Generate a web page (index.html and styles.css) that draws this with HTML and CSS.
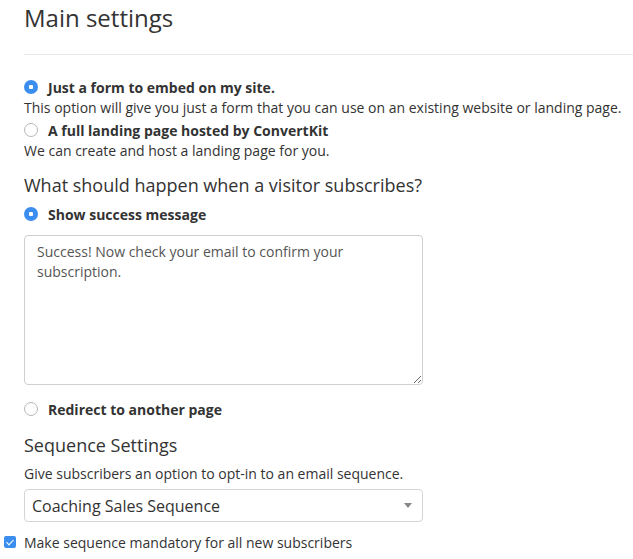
FILE: index.html
```html
<!DOCTYPE html>
<html>
<head>
<meta charset="utf-8">
<link rel="stylesheet" href="styles.css">
</head>
<body>
<div class="page">
  <h1 class="title">Main settings</h1>
  <div class="rule"></div>

  <div class="option">
    <label class="radio-row"><input type="radio" name="kind" class="radio" checked><span class="radio-label">Just a form to embed on my site.</span></label>
    <p class="desc">This option will give you just a form that you can use on an existing website or landing page.</p>
  </div>
  <div class="option">
    <label class="radio-row"><input type="radio" name="kind" class="radio"><span class="radio-label">A full landing page hosted by ConvertKit</span></label>
    <p class="desc">We can create and host a landing page for you.</p>
  </div>

  <h2 class="subhead">What should happen when a visitor subscribes?</h2>
  <label class="radio-row"><input type="radio" name="after" class="radio" checked><span class="radio-label">Show success message</span></label>
  <textarea class="message">Success! Now check your email to confirm your subscription.</textarea>
  <label class="radio-row redirect"><input type="radio" name="after" class="radio"><span class="radio-label">Redirect to another page</span></label>

  <h2 class="subhead seq">Sequence Settings</h2>
  <p class="desc seq-desc">Give subscribers an option to opt-in to an email sequence.</p>
  <div class="select">
    <span class="select-value">Coaching Sales Sequence</span>
    <span class="caret"></span>
  </div>
  <label class="check-row"><input type="checkbox" class="check" checked><span>Make sequence mandatory for all new subscribers</span></label>
</div>
</body>
</html>
```
FILE: styles.css
```css
html, body {
  margin: 0;
  padding: 0;
  background: #fff;
}
body {
  font-family: "Open Sans", "Liberation Sans", sans-serif;
  color: #333;
  font-size: 14px;
}
.page {
  padding-left: 24px;
}
.title {
  margin: 0;
  font-size: 24px;
  font-weight: 400;
  line-height: 36px;
  color: #333;
}
.rule {
  height: 1px;
  background: #e6e6e6;
  margin-top: 18px;
  margin-bottom: 21px;
}
.radio-row {
  display: flex;
  align-items: center;
  height: 22px;
}
.radio {
  -webkit-appearance: none;
  appearance: none;
  margin: 0 10px 0 0;
  width: 14px;
  height: 14px;
  min-width: 14px;
  border-radius: 50%;
  border: 1px solid #b8b8b8;
  background: #fff;
  box-sizing: border-box;
  flex: none;
}
.radio:checked {
  border: none;
  background: radial-gradient(circle, #fff 0 2px, #3b8ef0 2.5px);
}
.radio-label {
  font-weight: 700;
  font-size: 14px;
}
.desc {
  margin: 0;
  line-height: 20px;
  font-size: 14px;
}
.option + .option {
  margin-top: 1px;
}
.subhead {
  margin: 11px 0 5px;
  font-size: 18px;
  font-weight: 400;
  line-height: 26px;
}
.message {
  display: block;
  box-sizing: border-box;
  width: 399px;
  height: 150px;
  margin: 10px 0 13px;
  padding: 6px 12px;
  border: 1px solid #cfcfcf;
  border-radius: 4px;
  font-family: inherit;
  font-size: 14px;
  line-height: 20px;
  color: #555;
  resize: vertical;
}
.seq {
  margin-top: 12px;
  margin-bottom: 6px;
}
.seq-desc {
  margin-bottom: 5px;
}
.select {
  box-sizing: border-box;
  width: 399px;
  height: 33px;
  border: 1px solid #d4d4d4;
  border-radius: 4px;
  display: flex;
  align-items: center;
  justify-content: space-between;
  padding: 0 8px 0 7px;
}
.select-value {
  font-size: 16px;
  color: #333;
}
.caret {
  width: 0;
  height: 0;
  border-left: 4px solid transparent;
  border-right: 4px solid transparent;
  border-top: 5px solid #888;
  margin-right: 2px;
}
.check-row {
  display: flex;
  align-items: center;
  margin-left: -20px;
  margin-top: 8px;
  height: 24px;
}
.check {
  -webkit-appearance: none;
  appearance: none;
  margin: 0 8px 0 0;
  width: 12px;
  height: 12px;
  border-radius: 2px;
  background: #3b8ef0;
  position: relative;
  flex: none;
}
.check::after {
  content: "";
  position: absolute;
  left: 4px;
  top: 1.5px;
  width: 3px;
  height: 6px;
  border: solid #fff;
  border-width: 0 1.5px 1.5px 0;
  transform: rotate(45deg);
}
```
